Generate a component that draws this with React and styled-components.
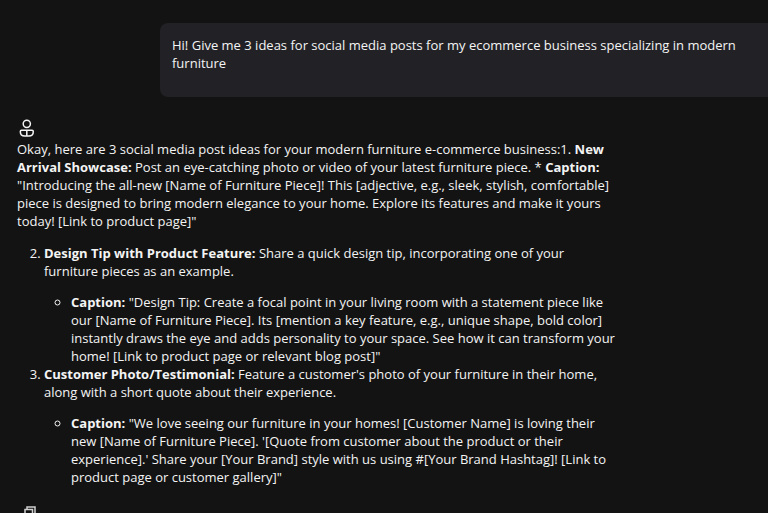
import styled, { createGlobalStyle } from "styled-components";

const GlobalStyle = createGlobalStyle`
  * {
    box-sizing: border-box;
  }
  body {
    margin: 0;
    background: #131313;
    color: #f4f4f4;
    font-family: "Open Sans", "Noto Sans", sans-serif;
    font-size: 13px;
    line-height: 18px;
  }
`;

const Chat = styled.main`
  display: flex;
  flex-direction: column;
  gap: 22px;
  height: 100vh;
  padding-top: 23px;
  overflow: hidden;
`;

const UserMessage = styled.section`
  flex-shrink: 0;
  margin-left: 160px;
  padding: 13px 12px 25px;
  border-radius: 8px 0 0 8px;
  background: #222226;
`;

const UserText = styled.p`
  margin: 0;
`;

const Reply = styled.article`
  flex-shrink: 0;
  width: 81%;
  padding: 0 4px 0 17px;
`;

const Avatar = styled.svg`
  display: block;
  width: 20px;
  height: 21px;
`;

const Intro = styled.p`
  margin: 0;
`;

const Ideas = styled.ol`
  margin: 14px 0 0;
  padding-left: 27px;
`;

const IdeaText = styled.p`
  margin: 0;
`;

const Captions = styled.ul`
  margin: 13px 0 0;
  padding-left: 27px;
  list-style: circle;
`;

const CopyButton = styled.button`
  display: block;
  margin: 20px 0 0 7px;
  padding: 0;
  border: 0;
  background: none;
  color: #d0d0d0;
`;

const CopyIcon = styled.svg`
  display: block;
  width: 12px;
  height: 14px;
`;

const ideas = [
  {
    title: "Design Tip with Product Feature:",
    text: "Share a quick design tip, incorporating one of your furniture pieces as an example.",
    caption:
      "\"Design Tip: Create a focal point in your living room with a statement piece like our [Name of Furniture Piece]. Its [mention a key feature, e.g., unique shape, bold color] instantly draws the eye and adds personality to your space. See how it can transform your home! [Link to product page or relevant blog post]\"",
  },
  {
    title: "Customer Photo/Testimonial:",
    text: "Feature a customer's photo of your furniture in their home, along with a short quote about their experience.",
    caption:
      "\"We love seeing our furniture in your homes! [Customer Name] is loving their new [Name of Furniture Piece]. '[Quote from customer about the product or their experience].' Share your [Your Brand] style with us using #[Your Brand Hashtag]! [Link to product page or customer gallery]\"",
  },
];

const App = () => {
  return (
    <>
      <GlobalStyle />
      <Chat>
        <UserMessage>
          <UserText>
            Hi! Give me 3 ideas for social media posts for my ecommerce business
            specializing in modern furniture
          </UserText>
        </UserMessage>
        <Reply>
          <Avatar
            viewBox="0 0 20 21"
            fill="none"
            stroke="#f4f4f4"
            strokeWidth="1.5"
            aria-hidden="true"
          >
            <circle cx="9.8" cy="4.8" r="3.6" />
            <path d="M4.500 11.200h10.600q1.200 0 1.200 1.200c0 3.200-2.300 4.600-4.500 4.600h-4c-2.200 0-4.500-1.400-4.500-4.600q0-1.200 1.200-1.200zM9.800 11.200v5.800" />
          </Avatar>
          <Intro>
            Okay, here are 3 social media post ideas for your modern furniture
            e-commerce business:1. <strong>New Arrival Showcase:</strong> Post
            an eye-catching photo or video of your latest furniture piece. *{" "}
            <strong>Caption:</strong> "Introducing the all-new [Name of
            Furniture Piece]! This [adjective, e.g., sleek, stylish,
            comfortable] piece is designed to bring modern elegance to your
            home. Explore its features and make it yours today! [Link to product
            page]"
          </Intro>
          <Ideas start={2}>
            {ideas.map((idea) => (
              <li key={idea.title}>
                <IdeaText>
                  <strong>{idea.title}</strong> {idea.text}
                </IdeaText>
                <Captions>
                  <li>
                    <strong>Caption:</strong> {idea.caption}
                  </li>
                </Captions>
              </li>
            ))}
          </Ideas>
          <CopyButton aria-label="Copy">
            <CopyIcon
              viewBox="0 0 12 14"
              fill="none"
              stroke="currentColor"
              strokeWidth="1.5"
              aria-hidden="true"
            >
              <path d="M3 3V1h8v9H9" />
              <path d="M1 3.5h7.500v9.500H1z" />
            </CopyIcon>
          </CopyButton>
        </Reply>
      </Chat>
    </>
  );
};

export default App;
